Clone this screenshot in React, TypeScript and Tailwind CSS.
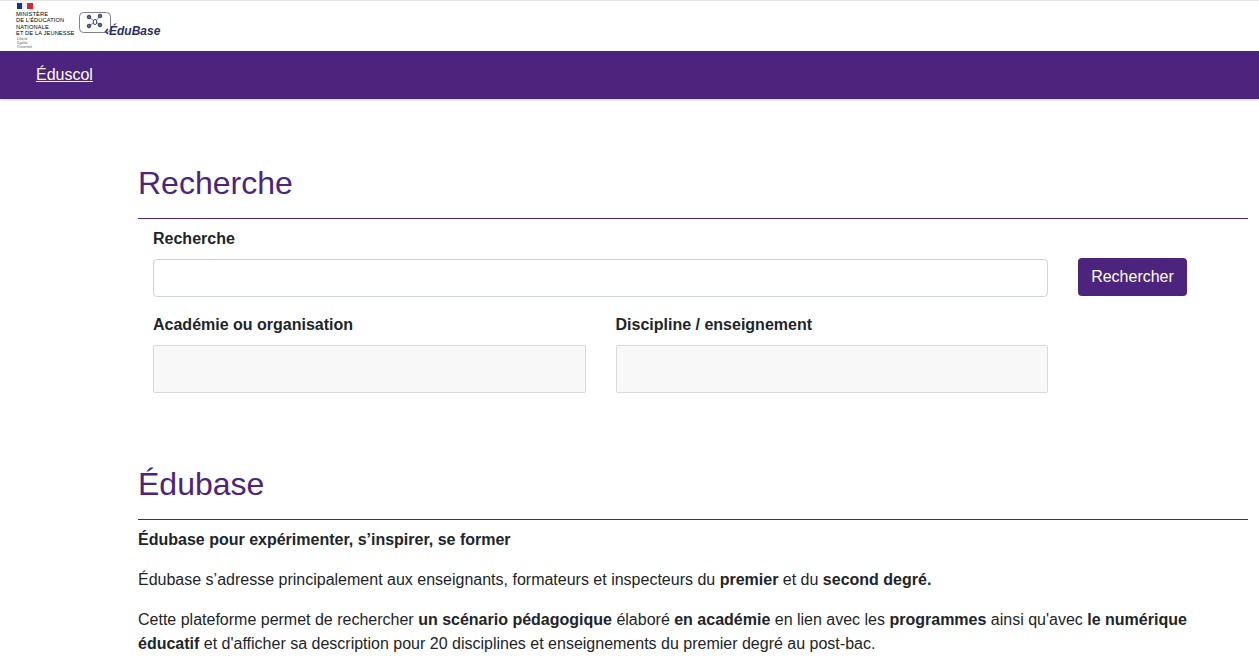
export default function App() {
  return (
    <div className="h-[668px] overflow-hidden bg-white font-['Liberation_Sans',Arial,sans-serif] text-[16px] text-[#212529]">
      <header className="flex h-[51px] items-start border-t border-[#e5e5e5] pl-[16px]">
        <div className="mt-[2px] w-[62px] text-black">
          <svg width="17" height="6" viewBox="0 0 17 6" className="block">
            <rect x="1" y="0" width="5" height="6" fill="#1f2f8f" />
            <rect x="6" y="0" width="5" height="6" fill="#eeeeee" />
            <rect x="11" y="0" width="6" height="6" fill="#e1252f" />
          </svg>
          <div className="mt-[2px] text-[5.7px] leading-[6.3px] tracking-[0.12px] whitespace-nowrap">
            MINISTÈRE<br />DE L’ÉDUCATION<br />NATIONALE<br />ET DE LA JEUNESSE
          </div>
          <div className="mt-[2px] ml-[1px] font-['Liberation_Serif',serif] text-[3.6px] leading-[3.8px] text-[#555] italic">
            Liberté<br />Égalité<br />Fraternité
          </div>
        </div>
        <div className="relative ml-[1px] h-[40px] w-[90px]">
          <svg width="34" height="22" viewBox="0 0 34 22" className="absolute top-[11px] left-0">
            <rect x="0.5" y="0.5" width="31" height="20" rx="4" fill="#fff" stroke="#7f8098" strokeWidth="1" />
            <path d="M11 6l4 3M20 5l-3 4M11 13l4-2M20 12l-3-2" stroke="#2d3166" strokeWidth="0.6" />
            <g fill="#5a6b98" stroke="#2d3166" strokeWidth="0.9">
              <circle cx="10" cy="5" r="1.8" />
              <circle cx="21" cy="4" r="1.8" />
              <circle cx="10" cy="14" r="1.8" />
              <circle cx="21" cy="13" r="1.8" />
              <ellipse cx="16" cy="10" rx="1.8" ry="2.6" fill="#fff" />
            </g>
          </svg>
          <svg width="5" height="7" viewBox="0 0 5 7" className="absolute top-[27px] left-[25px]">
            <path d="M4 1L1.5 3.5 4 6" fill="none" stroke="#2d3166" strokeWidth="1.5" />
          </svg>
          <span className="absolute top-[23px] left-[30px] text-[12px] leading-[14px] font-bold whitespace-nowrap text-[#2a3063] italic">
            ÉduBase
          </span>
        </div>
      </header>

      <nav className="flex h-[48px] items-center bg-[#4d247d] pl-[36px] shadow-[0_1px_2px_rgba(0,0,0,0.2)]">
        <a href="#" className="text-[16px] text-white underline">Éduscol</a>
      </nav>

      <main className="mr-[11px] ml-[138px]">
        <section className="pt-[64px]">
          <h1 className="border-b border-[#4d247d] pb-[14px] text-[32px] leading-[41px] text-[#4d247d]">Recherche</h1>
          <div className="pl-[15px]">
            <div className="mt-[10px] flex items-start gap-[30px]">
              <div className="w-[895px]">
                <label className="block leading-[20px] font-bold">Recherche</label>
                <input className="mt-[10px] block h-[38px] w-full rounded-[4px] border border-[#ced4da] bg-white" />
              </div>
              <button className="mt-[29px] h-[38px] w-[109px] rounded-[4px] bg-[#4d247d] text-[16px] text-white">Rechercher</button>
            </div>
            <div className="mt-[18px] flex w-[895px] gap-[30px]">
              <div className="flex-1">
                <label className="block leading-[20px] font-bold">Académie ou organisation</label>
                <div className="mt-[10px] h-[48px] rounded-[2px] border border-[#d9d9d9] bg-[#f8f8f8]" />
              </div>
              <div className="flex-1">
                <label className="block leading-[20px] font-bold">Discipline / enseignement</label>
                <div className="mt-[10px] h-[48px] rounded-[2px] border border-[#d9d9d9] bg-[#f8f8f8]" />
              </div>
            </div>
          </div>
        </section>

        <section className="pt-[71px]">
          <h1 className="border-b border-[#4d247d] pb-[14px] text-[32px] leading-[41px] text-[#4d247d]">Édubase</h1>
          <p className="mt-[10px] leading-[20px] font-bold">Édubase pour expérimenter, s’inspirer, se former</p>
          <p className="mt-[20px] leading-[20px]">
            Édubase s’adresse principalement aux enseignants, formateurs et inspecteurs du <b>premier</b> et du <b>second degré.</b>
          </p>
          <p className="mt-[18px] leading-[24px]">
            Cette plateforme permet de rechercher <b>un scénario pédagogique</b> élaboré <b>en académie</b> en lien avec les <b>programmes</b> ainsi qu'avec <b>le numérique éducatif</b> et d'afficher sa description pour 20 disciplines et enseignements du premier degré au post-bac.
          </p>
        </section>
      </main>
    </div>
  );
}
